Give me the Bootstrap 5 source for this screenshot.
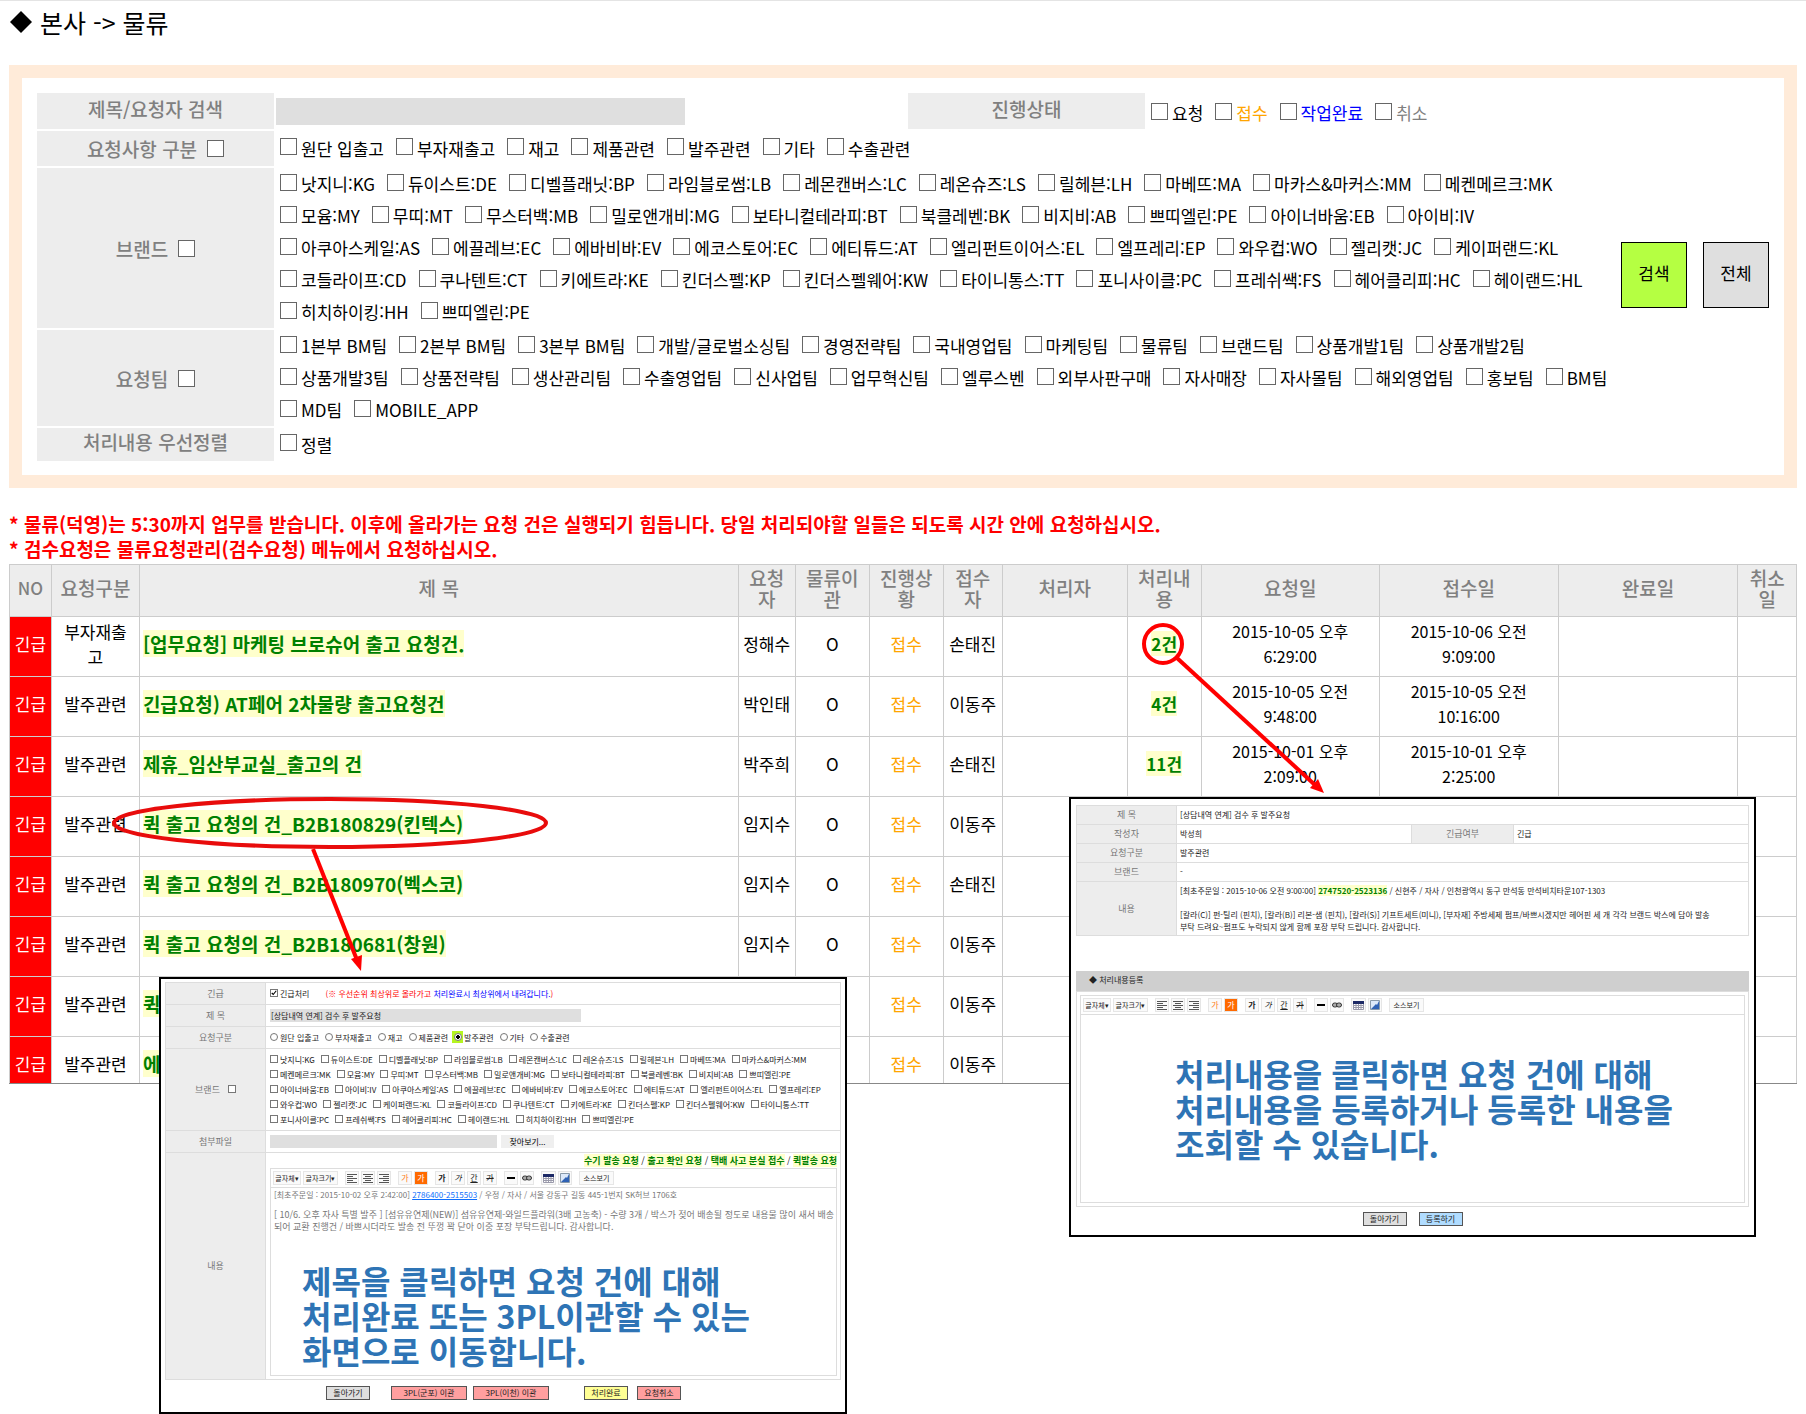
<!DOCTYPE html>
<html lang="ko">
<head>
<meta charset="utf-8">
<meta name="viewport" content="width=device-width, initial-scale=1">
<title>본사 -&gt; 물류</title>
<link href="https://cdn.jsdelivr.net/npm/bootstrap@5.3.0/dist/css/bootstrap.min.css" rel="stylesheet">
<style>
body{font-family:"Noto Sans CJK KR",sans-serif;font-size:17px;line-height:25px;color:#000;background:#fff}
.page-wrap{padding:0 9px;border-top:1px solid #e4e4e4;min-height:1414px}
.page-title{font-size:25px;line-height:36px;font-weight:400;margin:3px 0 25px;gap:7px}
.page-title svg{width:24px;height:24px}
.search-panel{border:13px solid #ffebd9;padding:15px 15px 14px 15px}
.search-rows{display:flex;flex-direction:column;gap:2px}
.head-cell{width:237px;flex:none;background:#ededed;color:#808080;display:flex;align-items:center;justify-content:center;gap:10px;font-weight:500;font-size:19px}
.head-cell.plain{padding-bottom:6px}
.head-cell.second{margin-left:223px}
.f-row{display:flex;min-height:35px}
.f-row.short{min-height:33px}
.f-body{padding:0 0 0 6px;display:flex;flex-direction:column;justify-content:center}
.line{display:flex;gap:12px;line-height:32px;white-space:nowrap}
.ck{display:inline-flex;align-items:center;gap:4px}
.ck input,.head-cell input{appearance:none;width:17px;height:17px;margin:0 0 4px;border:1px solid #666;background:#fff;border-radius:0;flex:none}
.head-cell input{margin:0}
.key-input{width:409px;height:27px;border:0;background:#dfdfdf;margin:5px 0 0 2px}
.btn-pair{padding-bottom:4px}
.big-btn{width:66px;height:66px;border:1px solid #000;border-radius:0;padding:0 0 6px;font-size:17px;color:#000}
.c-lime{background:#b5ff42}.c-gray{background:#dfdfdf}
.c-orange{color:#ffa500}.c-blue{color:#00f}.c-dim{color:#808080}
.notice{color:#f00;font-weight:700;margin:23px 0 3px;font-size:19px;line-height:25px}
.list-pane{height:520px;overflow:hidden;border-bottom:1px solid #888}
.req-table{width:100%;table-layout:fixed;border-collapse:collapse;text-align:center}
.req-table th,.req-table td{border:1px solid #ccc;padding:0 3px;word-break:break-all}
.req-table th{background:#ededed;color:#808080;font-weight:500;font-size:19px;line-height:21px;height:52px;padding-bottom:6px}
.req-table th:first-child{font-size:17px}
.req-table td{height:60px;padding-bottom:6px}
.req-table td:nth-child(2){padding-left:6px;padding-right:6px}
.req-table td.t-left{text-align:left;font-size:19px}
.req-table td.when{font-size:16px}
.req-table td.urgent{background:red;color:#fff;padding-left:0;padding-right:0}
.hl{color:#008000;background:#ffffcc;font-weight:700;text-decoration:none}
.marks{position:absolute;left:0;top:-1px;pointer-events:none}
.pop{position:absolute;background:#fff;border:2px solid #000;font-size:8px;line-height:12px;color:#222}
.pop-a{left:159px;top:976px;width:688px;height:437px;padding:3px 4px}
.pop-b{left:1069px;top:796px;width:687px;height:440px;padding:6px 5px}
.pop table{width:100%;border-collapse:collapse;table-layout:fixed}
.pop th,.pop td{border:1px solid #ddd;padding:0 3px}
.pop-a td{padding-left:4px}
.pop th{background:#ededed;color:#777;font-size:9px;font-weight:400;text-align:center}
.pop-a tr{height:22px}.pop-b tr{height:19px}
.pop-a tr.tall-brand{height:82px}.pop-a tr.tall-body{height:227px}.pop-b tr.tall-text{height:54px}
.pop .line{gap:6px;line-height:15px}
.pop .ck{gap:2px}
.pop .ck input,.pop th input{appearance:none;width:8px;height:8px;border:1px solid #777;background:#fff;margin:0 0 1px;border-radius:0}
.pop .ck input[type=radio]{border-radius:50%}
.pop .ck input[type=radio]:checked{background:radial-gradient(#000 45%,#fff 50%)}
.pop .ck:has(input[type=radio]:checked){background:linear-gradient(#b5f520,#b5f520) no-repeat 0 1px/11px 12px;margin-left:-2px;padding-left:2px}
.pop .ck input[type=checkbox]:checked{background:url("data:image/svg+xml,%3Csvg xmlns='http://www.w3.org/2000/svg' viewBox='0 0 8 8'%3E%3Cpath d='M1 4 3 6 7 1' fill='none' stroke='black' stroke-width='1.500'/%3E%3C/svg%3E")}
.s-input{height:13px;border:0;background:#dfdfdf;font-size:8px;padding:0 1px;color:#222;display:block}
.w-subject{width:311px}.w-file{width:227px}
.s-file{border:0;background:#efefef;height:13px;width:53px;font-size:8px;padding:0;line-height:12px}
.quick{font-size:9px;padding:2px 0 1px}
.ed-box{border:1px solid #ddd}
.ed-area{height:208px}
.ed-bar{display:flex;align-items:center;gap:2px;height:19px;padding:0 2px;border-bottom:1px solid #ddd;background:#fff}
.ed-bar button{height:14px;min-width:14px;border:1px solid #e6e6e6;background:#fafafa;padding:0 1px;font-size:8px;line-height:12px;display:flex;align-items:center;justify-content:center;color:#222}
.ed-bar .wide{font-size:7px;white-space:nowrap}
.ed-bar .w-a{width:28px}.ed-bar .w-b{width:35px}
.ed-bar .sp{margin-left:5px}
.ed-text{color:#777;padding:1px 3px;white-space:nowrap}
.ed-text p{margin:0 0 8px}
.ed-text .para{font-size:9px;line-height:12px;margin:0}
.tip{color:#2e74b5;font-size:32px;line-height:35px;font-weight:700;margin:0}
.pop-a .tip{padding:29px 0 0 31px}
.pop-b .tip{padding:41px 0 0 94px}
.foot-a{padding:6px 0 0 161px}.foot-b{gap:12px;padding-top:5px}
.sm-btn{height:14px;width:44px;border:1px solid #555;font-size:8px;line-height:12px;padding:0;color:#222}
.sm-btn.w76{width:76px}
.gap-l{margin-left:21px}.gap-s{margin-left:6px}.gap-xl{margin-left:35px}.gap-m{margin-left:9px}
.c-pink{background:#ff9f9f}.c-yellow{background:#ffff94}.c-sky{background:#b0dcff}
.bar-title{background:#cfcfcf;height:20px;line-height:18px;padding-left:13px;margin-top:35px}
</style>
<script src="https://cdn.jsdelivr.net/npm/bootstrap@5.3.0/dist/js/bootstrap.bundle.min.js"></script>
</head>
<body>
<main class="page-wrap position-relative">
<h1 class="page-title d-flex align-items-center"><svg viewBox="0 0 24 24"><path d="M12 1 23 12 12 23 1 12Z"/></svg><span>본사 -&gt; 물류</span></h1>

<form class="search-panel d-flex align-items-center justify-content-between" onsubmit="return false">
  <div class="search-rows">
    <div class="f-row">
      <label class="head-cell plain" for="kw">제목/요청자 검색</label>
      <input id="kw" class="key-input" type="text">
      <div class="head-cell plain second">진행상태</div>
      <div class="f-body pt-1" data-checks="요청|접수|작업완료|취소" data-colors="|c-orange|c-blue|c-dim"></div>
    </div>
    <div class="f-row"><label class="head-cell">요청사항 구분 <input type="checkbox"></label>
      <div class="f-body" data-checks="원단 입출고|부자재출고|재고|제품관련|발주관련|기타|수출관련"></div></div>
    <div class="f-row"><label class="head-cell">브랜드 <input type="checkbox"></label>
      <div class="f-body" data-checks="낫지니:KG|듀이스트:DE|디벨플래닛:BP|라임블로썸:LB|레몬캔버스:LC|레온슈즈:LS|릴헤븐:LH|마베뜨:MA|마카스&amp;마커스:MM|메켄메르크:MK
모윰:MY|무띠:MT|무스터백:MB|밀로앤개비:MG|보타니컬테라피:BT|북클레벤:BK|비지비:AB|쁘띠엘린:PE|아이너바움:EB|아이비:IV
아쿠아스케일:AS|에끌레브:EC|에바비바:EV|에코스토어:EC|에티튜드:AT|엘리펀트이어스:EL|엘프레리:EP|와우컵:WO|젤리캣:JC|케이퍼랜드:KL
코들라이프:CD|쿠나텐트:CT|키에트라:KE|킨더스펠:KP|킨더스펠웨어:KW|타이니통스:TT|포니사이클:PC|프레쉬쌕:FS|헤어클리피:HC|헤이랜드:HL
히치하이킹:HH|쁘띠엘린:PE"></div></div>
    <div class="f-row"><label class="head-cell">요청팀 <input type="checkbox"></label>
      <div class="f-body" data-checks="1본부 BM팀|2본부 BM팀|3본부 BM팀|개발/글로벌소싱팀|경영전략팀|국내영업팀|마케팅팀|물류팀|브랜드팀|상품개발1팀|상품개발2팀
상품개발3팀|상품전략팀|생산관리팀|수출영업팀|신사업팀|업무혁신팀|엘루스벤|외부사판구매|자사매장|자사몰팀|해외영업팀|홍보팀|BM팀
MD팀|MOBILE_APP"></div></div>
    <div class="f-row short"><div class="head-cell plain">처리내용 우선정렬</div>
      <div class="f-body" data-checks="정렬"></div></div>
  </div>
  <div class="btn-pair d-flex gap-3">
    <button class="big-btn c-lime" type="submit">검색</button>
    <button class="big-btn c-gray" type="button">전체</button>
  </div>
</form>

<p class="notice">* 물류(덕영)는 5:30까지 업무를 받습니다. 이후에 올라가는 요청 건은 실행되기 힘듭니다. 당일 처리되야할 일들은 되도록 시간 안에 요청하십시오.<br>* 검수요청은 물류요청관리(검수요청) 메뉴에서 요청하십시오.</p>

<div class="list-pane">
<table class="req-table">
<colgroup><col style="width:2.35%"><col style="width:4.92%"><col style="width:33.5%"><col style="width:3.2%"><col style="width:4.14%"><col style="width:4.14%"><col style="width:3.3%"><col style="width:7%"><col style="width:4.14%"><col style="width:9.96%"><col style="width:10.02%"><col style="width:10.05%"><col style="width:3.28%"></colgroup>
<thead><tr><th>NO</th><th>요청구분</th><th>제 목</th><th>요청자</th><th>물류이관</th><th>진행상황</th><th>접수자</th><th>처리자</th><th>처리내용</th><th>요청일</th><th>접수일</th><th>완료일</th><th>취소일</th></tr></thead>
<tbody>
<tr><td class="urgent">긴급</td><td>부자재출고</td><td class="t-left"><a class="hl" href="#">[업무요청] 마케팅 브로슈어 출고 요청건.</a></td><td>정해수</td><td>O</td><td class="c-orange">접수</td><td>손태진</td><td></td><td><a class="hl" href="#">2건</a></td><td class="when">2015-10-05 오후<br>6:29:00</td><td class="when">2015-10-06 오전<br>9:09:00</td><td></td><td></td></tr>
<tr><td class="urgent">긴급</td><td>발주관련</td><td class="t-left"><a class="hl" href="#">긴급요청) AT페어 2차물량 출고요청건</a></td><td>박인태</td><td>O</td><td class="c-orange">접수</td><td>이동주</td><td></td><td><a class="hl" href="#">4건</a></td><td class="when">2015-10-05 오전<br>9:48:00</td><td class="when">2015-10-05 오전<br>10:16:00</td><td></td><td></td></tr>
<tr><td class="urgent">긴급</td><td>발주관련</td><td class="t-left"><a class="hl" href="#">제휴_임산부교실_출고의 건</a></td><td>박주희</td><td>O</td><td class="c-orange">접수</td><td>손태진</td><td></td><td><a class="hl" href="#">11건</a></td><td class="when">2015-10-01 오후<br>2:09:00</td><td class="when">2015-10-01 오후<br>2:25:00</td><td></td><td></td></tr>
<tr><td class="urgent">긴급</td><td>발주관련</td><td class="t-left"><a class="hl" href="#">퀵 출고 요청의 건_B2B180829(킨텍스)</a></td><td>임지수</td><td>O</td><td class="c-orange">접수</td><td>이동주</td><td></td><td></td><td></td><td></td><td></td><td></td></tr>
<tr><td class="urgent">긴급</td><td>발주관련</td><td class="t-left"><a class="hl" href="#">퀵 출고 요청의 건_B2B180970(벡스코)</a></td><td>임지수</td><td>O</td><td class="c-orange">접수</td><td>손태진</td><td></td><td></td><td></td><td></td><td></td><td></td></tr>
<tr><td class="urgent">긴급</td><td>발주관련</td><td class="t-left"><a class="hl" href="#">퀵 출고 요청의 건_B2B180681(창원)</a></td><td>임지수</td><td>O</td><td class="c-orange">접수</td><td>이동주</td><td></td><td></td><td></td><td></td><td></td><td></td></tr>
<tr><td class="urgent">긴급</td><td>발주관련</td><td class="t-left"><a class="hl" href="#">퀵</a></td><td></td><td></td><td class="c-orange">접수</td><td>이동주</td><td></td><td></td><td></td><td></td><td></td><td></td></tr>
<tr><td class="urgent">긴급</td><td>발주관련</td><td class="t-left"><a class="hl" href="#">에</a></td><td></td><td></td><td class="c-orange">접수</td><td>이동주</td><td></td><td></td><td></td><td></td><td></td><td></td></tr>
</tbody>
</table>
</div>

<svg class="marks" width="1806" height="1000" viewBox="0 0 1806 1000" fill="none" stroke="#f00">
  <ellipse cx="330" cy="823" rx="216" ry="24" stroke="#e80c0c" stroke-width="4"/>
  <path d="M313 849 357 960" stroke-width="4"/><path d="M361 971 351 959 362 955Z" fill="#f00" stroke="none"/>
  <circle cx="1163" cy="644" r="19" stroke-width="4"/>
  <path d="M1177 658 1315 785" stroke-width="4"/><path d="M1324 793 1310 788 1318 779Z" fill="#f00" stroke="none"/>
</svg>

<section class="pop pop-a">
<table>
<colgroup><col style="width:100px"><col></colgroup>
<tr><th>긴급</th><td><div class="d-flex"><label class="ck"><input type="checkbox" checked>긴급처리</label><span class="ms-3" style="color:red">(※ 우선순위 최상위로 올라가고 <span class="c-blue">처리완료시 최상위에서 내려갑니다.</span>)</span></div></td></tr>
<tr><th><label for="subj">제 목</label></th><td><input id="subj" class="s-input w-subject" value="[상담내역 연계] 검수 후 발주요청"></td></tr>
<tr><th>요청구분</th><td data-checks="원단 입출고|부자재출고|재고|제품관련|발주관련|기타|수출관련" data-type="radio" data-on="4"></td></tr>
<tr class="tall-brand"><th><label class="d-inline-flex align-items-center gap-2">브랜드 <input type="checkbox"></label></th><td data-checks="낫지니:KG|듀이스트:DE|디벨플래닛:BP|라임블로썸:LB|레몬캔버스:LC|레온슈즈:LS|릴헤븐:LH|마베뜨:MA|마카스&amp;마커스:MM
메켄메르크:MK|모윰:MY|무띠:MT|무스터백:MB|밀로앤개비:MG|보타니컬테라피:BT|북클레벤:BK|비지비:AB|쁘띠엘린:PE
아이너바움:EB|아이비:IV|아쿠아스케일:AS|에끌레브:EC|에바비바:EV|에코스토어:EC|에티튜드:AT|엘리펀트이어스:EL|엘프레리:EP
와우컵:WO|젤리캣:JC|케이퍼랜드:KL|코들라이프:CD|쿠나텐트:CT|키에트라:KE|킨더스펠:KP|킨더스펠웨어:KW|타이니통스:TT
포니사이클:PC|프레쉬쌕:FS|헤어클리피:HC|헤이랜드:HL|히치하이킹:HH|쁘띠엘린:PE"></td></tr>
<tr><th><label for="att">첨부파일</label></th><td><div class="d-flex gap-1"><input id="att" class="s-input w-file"><button class="s-file" type="button">찾아보기...</button></div></td></tr>
<tr class="tall-body"><th>내용</th><td class="align-top">
  <div class="quick text-end"><a class="hl" href="#">수기 발송 요청</a> / <a class="hl" href="#">출고 확인 요청</a> / <a class="hl" href="#">택배 사고 분실 접수</a> / <a class="hl" href="#">퀵발송 요청</a></div>
  <div class="ed-box ed-area"><div class="ed-bar"></div>
    <div class="ed-text"><p>[최초주문일 : 2015-10-02 오후 2:42:00] <a href="#">2786400-2515503</a> / 우정 / 자사 / 서울 강동구 길동 445-1번지 SK허브 1706호</p><p class="para">[ 10/6. 오후 자사 특별 발주 ] [섬유유연제(NEW)] 섬유유연제-와일드플라워(3배 고농축) - 수량 3개 / 박스가 젖어 배송될 정도로 내용물 많이 새서 배송<br>되어 교환 진행건 / 바쁘시더라도 발송 전 뚜껑 꽉 닫아 이중 포장 부탁드립니다. 감사합니다.</p></div>
    <p class="tip">제목을 클릭하면 요청 건에 대해<br>처리완료 또는 3PL이관할 수 있는<br>화면으로 이동합니다.</p>
  </div></td></tr>
</table>
<div class="foot-a d-flex">
  <button class="sm-btn c-gray">돌아가기</button><button class="sm-btn w76 c-pink gap-l">3PL(군포) 이관</button><button class="sm-btn w76 c-pink gap-s">3PL(이천) 이관</button><button class="sm-btn c-yellow gap-xl">처리완료</button><button class="sm-btn c-pink gap-m">요청취소</button>
</div>
</section>

<section class="pop pop-b">
<table>
<colgroup><col style="width:100px"><col><col style="width:102px"><col style="width:235px"></colgroup>
<tr><th>제 목</th><td colspan="3">[상담내역 연계] 검수 후 발주요청</td></tr>
<tr><th>작성자</th><td>박성희</td><th>긴급여부</th><td>긴급</td></tr>
<tr><th>요청구분</th><td colspan="3">발주관련</td></tr>
<tr><th>브랜드</th><td colspan="3">-</td></tr>
<tr class="tall-text"><th>내용</th><td colspan="3" class="text-nowrap">[최초주문일 : 2015-10-06 오전 9:00:00] <a class="hl" href="#">2747520-2523136</a> / 신현주 / 자사 / 인천광역시 동구 만석동 만석비치타운107-1303<br><br>[칼라(C)] 펀-틸리 (핀치), [칼라(B)] 리본-샘 (핀치), [칼라(S)] 기프트세트(미니), [부자재] 주방세제 펌프/바쁘시겠지만 헤어핀 세 개 각각 브랜드 박스에 담아 발송<br>부탁 드려요~펌프도 누락되지 않게 함께 포장 부탁 드립니다. 감사합니다.</td></tr>
</table>
<div class="bar-title">◆ 처리내용등록</div>
<div class="ed-box" style="padding:3px">
  <div class="ed-box ed-area"><div class="ed-bar"></div>
  <p class="tip">처리내용을 클릭하면 요청 건에 대해<br>처리내용을 등록하거나 등록한 내용을<br>조회할 수 있습니다.</p></div>
</div>
<div class="foot-b d-flex justify-content-center"><button class="sm-btn c-gray">돌아가기</button><button class="sm-btn c-sky">등록하기</button></div>
</section>
</main>

<script>
// Build each group of tick boxes or radios: one line per text row, items split by "|".
let groupNo = 0;
document.querySelectorAll('[data-checks]').forEach(box => {
  const type = box.dataset.type || 'checkbox', colors = (box.dataset.colors || '').split('|');
  groupNo++;
  box.dataset.checks.split('\n').forEach(row => {
    const line = document.createElement('div');
    line.className = 'line';
    row.split('|').forEach((text, i) => {
      const label = document.createElement('label'), input = document.createElement('input');
      label.className = 'ck ' + (colors[i] || '');
      input.type = type; input.name = 'g' + groupNo;
      if (box.dataset.on === String(i)) input.checked = true;
      label.append(input, text);
      line.append(label);
    });
    box.append(line);
  });
});
// Editor toolbar shared by both windows.
const lines = x => `<svg width="10" height="9" viewBox="0 0 10 9" stroke="#555"><path d="M0 .5H10M${x[0]} 2.5H${x[1]}M0 4.5H10M${x[0]} 6.5H${x[1]}M0 8.5H10"/></svg>`;
const bar = `<button class="wide w-a">글자체▾</button><button class="wide w-b">글자크기▾</button>
<button class="sp" aria-label="왼쪽">${lines([0,6])}</button><button aria-label="가운데">${lines([2,8])}</button><button aria-label="오른쪽">${lines([4,10])}</button>
<button class="sp" style="color:#ff7a1a">가</button><button style="background:#ff6a00;color:#fff">가</button>
<button class="sp fw-bold">가</button><button class="fst-italic">가</button><button class="text-decoration-underline">간</button><button class="text-decoration-line-through">가</button>
<button class="sp" aria-label="선"><svg width="8" height="2"><path d="M0 0H8V2H0Z"/></svg></button>
<button aria-label="링크"><svg width="10" height="6" viewBox="0 0 10 6" fill="#aaa" stroke="#333"><rect x=".5" y="1" width="5" height="4" rx="2"/><rect x="4.500" y="1" width="5" height="4" rx="2"/></svg></button>
<button class="sp" aria-label="표"><svg width="11" height="9" viewBox="0 0 11 9"><path d="M.5.5H10.500V8.500H.5ZM.5 4.500H10.500M.5 6.500H10.500M3 2V9M5.500 2V9M8 2V9" fill="#fff" stroke="#99a" /><path d="M0 0H11V3H0Z" fill="#1d2a66"/></svg></button>
<button aria-label="그림"><svg width="10" height="10" viewBox="0 0 10 10"><path d="M.5.5H9.500V9.500H.5Z" fill="#dce9fa" stroke="#89a"/><path d="M1 9 6 4 7 5 9 1V9Z" fill="#2f62b5"/></svg></button>
<button class="wide w-b sp">소스보기</button>`;
document.querySelectorAll('.ed-bar').forEach(el => el.innerHTML = bar);
</script>
</body>
</html>
